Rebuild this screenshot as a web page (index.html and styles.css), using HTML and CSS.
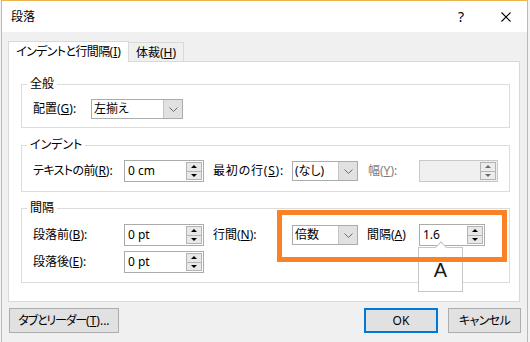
FILE: index.html
```html
<!DOCTYPE html>
<html lang="ja">
<head>
<meta charset="utf-8">
<title>段落</title>
<link rel="stylesheet" href="styles.css">
</head>
<body>
<div class="dialog">
  <div class="titlebar">
    <span class="title">段落</span>
    <span class="help">?</span>
    <span class="close"><svg width="10" height="10" viewBox="0 0 10 10"><path d="M0.5 0.5L9.5 9.5M9.5 0.5L0.5 9.5" stroke="#000" stroke-width="1.1" fill="none"/></svg></span>
  </div>
  <div class="body">
    <div class="tabs">
      <div class="tab active"><span class="narrow">インデントと行間隔</span>(<u>I</u>)</div>
      <div class="tab">体裁(<u>H</u>)</div>
    </div>
    <div class="panel">
      <fieldset class="group g1">
        <legend>全般</legend>
        <div class="row">
          <span class="lbl w58">配置(<u>G</u>):</span>
          <div class="select w92"><span class="val">左揃え</span><span class="drop"><svg width="9" height="5" viewBox="0 0 9 5"><polyline points="0.5,0.5 4.5,4.5 8.5,0.5" fill="none" stroke="#6a6a6a"/></svg></span></div>
        </div>
      </fieldset>
      <fieldset class="group g2">
        <legend>インデント</legend>
        <div class="row">
          <span class="lbl w91"><span class="narrow">テキストの前</span>(<u>R</u>):</span>
          <div class="spin w80"><span class="val">0 cm</span><span class="arrows"><span class="up"></span><span class="dn"></span></span></div>
          <span class="lbl w79 ml9 wide">最初の行(<u>S</u>):</span>
          <div class="select w66"><span class="val">(なし)</span><span class="drop"><svg width="9" height="5" viewBox="0 0 9 5"><polyline points="0.5,0.5 4.5,4.5 8.5,0.5" fill="none" stroke="#6a6a6a"/></svg></span></div>
          <span class="lbl w51 ml10 disabled">幅(<u>Y</u>):</span>
          <div class="spin w79 off"><span class="val"></span><span class="arrows"><span class="up"></span><span class="dn"></span></span></div>
        </div>
      </fieldset>
      <fieldset class="group g3">
        <legend>間隔</legend>
        <div class="rows">
          <div class="row">
            <span class="lbl w91">段落前(<u>B</u>):</span>
            <div class="spin w80"><span class="val">0 pt</span><span class="arrows"><span class="up"></span><span class="dn"></span></span></div>
            <span class="lbl w79 ml9">行間(<u>N</u>):</span>
            <div class="select w66"><span class="val">倍数</span><span class="drop"><svg width="9" height="5" viewBox="0 0 9 5"><polyline points="0.5,0.5 4.5,4.5 8.5,0.5" fill="none" stroke="#6a6a6a"/></svg></span></div>
            <span class="lbl w52 ml9">間隔(<u>A</u>)</span>
            <div class="spin w66 tipped"><span class="val">1.6</span><span class="arrows"><span class="up"></span><span class="dn"></span></span><div class="tip">A</div></div>
          </div>
          <div class="row">
            <span class="lbl w91">段落後(<u>E</u>):</span>
            <div class="spin w80"><span class="val">0 pt</span><span class="arrows"><span class="up"></span><span class="dn"></span></span></div>
          </div>
          <div class="highlight"></div>
        </div>
      </fieldset>
    </div>
    <div class="buttons">
      <button class="btn tabs-btn"><span class="narrower">タブとリーダー</span>(<u>T</u>)...</button>
      <button class="btn ok">OK</button>
      <button class="btn cancel"><span class="narrow">キャンセル</span></button>
    </div>
  </div>
</div>
</body>
</html>
```
FILE: styles.css
```css
html, body {
  margin: 0;
  height: 342px;
  overflow: hidden;
}
body {
  background: #f3f3f3;
  font-family: "Noto Sans", "Noto Sans CJK JP", sans-serif;
  font-size: 12px;
  line-height: 16px;
  color: #000;
  font-feature-settings: "palt";
}
.narrow {
  letter-spacing: -0.6px;
}
.narrower {
  letter-spacing: -1.2px;
}
.wide {
  letter-spacing: 0.8px;
}
.dialog {
  margin-left: 1px;
  width: 527px;
  height: 342px;
  box-sizing: border-box;
  border: 1px solid #e9b54e;
  border-bottom: none;
  background: #f0f0f0;
}
.titlebar {
  height: 31px;
  background: #fff;
  display: flex;
  align-items: center;
}
.title {
  padding-left: 9px;
  flex: 1;
}
.help {
  width: 20px;
  text-align: center;
  font-size: 14px;
  margin-right: 30px;
}
.close {
  width: 10px;
  height: 10px;
  display: flex;
  margin-right: 16px;
}
.body {
  padding: 9px 7px 0 6px;
}
.tabs {
  display: flex;
  align-items: flex-end;
  height: 20px;
}
.tab {
  box-sizing: border-box;
  border: 1px solid #d9d9d9;
  border-bottom: none;
  text-align: center;
  background: #f0f0f0;
  white-space: nowrap;
}
.tab.active {
  width: 121px;
  height: 21px;
  padding-top: 2px;
  margin-bottom: -1px;
  background: #fff;
  position: relative;
  z-index: 1;
}
.tab:not(.active) {
  width: 56px;
  height: 19px;
  padding-top: 2px;
  margin-left: -1px;
}
.panel {
  background: #fff;
  border: 1px solid #d9d9d9;
  padding: 14px 9px 18px 12px;
}
.group {
  margin: 0;
  border: 1px solid #dcdcdc;
  padding: 7px 0 8px 11px;
  min-width: 0;
}
.group legend {
  padding: 0 3px;
  margin-left: -6px;
  line-height: 16px;
}
.g2 {
  margin-top: 9px;
  padding-bottom: 9px;
}
.g3 {
  margin-top: 8px;
  padding-top: 8px;
  padding-bottom: 9px;
}
.rows {
  position: relative;
  display: flex;
  flex-direction: column;
  gap: 5px;
}
.row {
  display: flex;
  align-items: center;
}
.g2 .row, .g3 .row {
  height: 22px;
}
.lbl {
  flex: none;
  white-space: nowrap;
}
.lbl.disabled {
  color: #7d7d7d;
}
.w51 { width: 51px; }
.w52 { width: 52px; }
.w58 { width: 58px; }
.w66 { width: 66px; }
.w79 { width: 79px; }
.w80 { width: 80px; }
.w91 { width: 91px; }
.w92 { width: 92px; }
.ml9 { margin-left: 9px; }
.ml10 { margin-left: 10px; }
.select {
  flex: none;
  display: flex;
  height: 20px;
  box-sizing: border-box;
  border: 1px solid #ababab;
  background: #fff;
}
.select .val {
  flex: 1;
  padding-left: 2px;
  line-height: 18px;
  white-space: nowrap;
}
.drop {
  width: 19px;
  box-sizing: border-box;
  background: #e1e1e1;
  border-left: 1px solid #c4c4c4;
  display: flex;
  align-items: center;
  justify-content: center;
}
.spin {
  flex: none;
  display: flex;
  height: 22px;
  box-sizing: border-box;
  border: 1px solid #ababab;
  background: #fff;
  padding: 1px 1px 1px 3px;
}
.spin.off {
  background: #f0f0f0;
  border-color: #c8c8c8;
}
.spin .val {
  flex: 1;
  line-height: 18px;
  white-space: nowrap;
}
.arrows {
  width: 16px;
  box-sizing: border-box;
  border: 1px solid #b4b4b4;
  display: flex;
  flex-direction: column;
}
.arrows span {
  flex: 1;
  background: #e8e8e8;
  display: flex;
  align-items: center;
  justify-content: center;
}
.arrows .up {
  border-bottom: 1px solid #b4b4b4;
}
.arrows .up::before {
  content: "";
  border-left: 3px solid transparent;
  border-right: 3px solid transparent;
  border-bottom: 3px solid #000;
}
.arrows .dn::before {
  content: "";
  border-left: 3px solid transparent;
  border-right: 3px solid transparent;
  border-top: 3px solid #000;
}
.spin.off .arrows span {
  background: #ececec;
}
.spin.off .arrows .up::before { border-bottom-color: #6a6a6a; }
.spin.off .arrows .dn::before { border-top-color: #6a6a6a; }
.tipped {
  position: relative;
}
.tip {
  position: absolute;
  left: -2px;
  top: 22px;
  width: 45px;
  height: 45px;
  box-sizing: border-box;
  border: 1px solid #c6c6c6;
  background: #fff;
  font-family: "Liberation Sans", Arial, sans-serif;
  font-size: 20px;
  line-height: 20px;
  color: #1a1a1a;
  display: flex;
  align-items: center;
  justify-content: center;
  z-index: 2;
}
.tip::before {
  content: "";
  position: absolute;
  left: 18px;
  top: -5px;
  width: 7px;
  height: 7px;
  background: #fff;
  border-top: 1px solid #c6c6c6;
  border-left: 1px solid #c6c6c6;
  transform: rotate(45deg);
}
.highlight {
  position: absolute;
  left: 244px;
  top: -14px;
  width: 230px;
  height: 52px;
  box-sizing: border-box;
  border: 5px solid #fb8127;
  z-index: 3;
}
.buttons {
  display: flex;
  margin: 6px -1px 0 1px;
}
.btn {
  height: 25px;
  box-sizing: border-box;
  border: 1px solid #adadad;
  background: #e1e1e1;
  font: inherit;
  color: #000;
  padding: 0;
  font-feature-settings: "palt";
}
.tabs-btn {
  width: 110px;
}
.ok {
  width: 74px;
  margin-left: auto;
  border: 2px solid #0078d7;
}
.cancel {
  width: 73px;
  margin-left: 10px;
}
```
